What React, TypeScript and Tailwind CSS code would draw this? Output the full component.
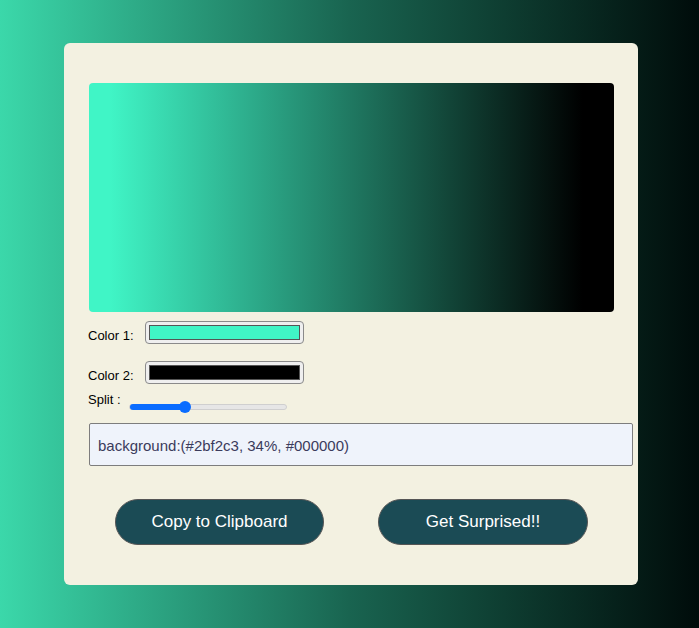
import { useState } from "react";

export default function App() {
    const [color1] = useState("#40f5c6");
    const [color2] = useState("#000000");
    const [split] = useState(34);

    return (
        <div
            className="w-full h-[628px] flex items-center justify-center bg-[linear-gradient(90deg,#3bd8aa_0%,#196450_50%,#000c0a_100%)]"
            style={{ fontFamily: '"Liberation Sans", Arial, sans-serif' }}
        >
            <div className="ml-[3px] w-[574px] h-[542px] bg-[#f3f1e1] rounded-[6px] pt-[40px] pb-[40px] pl-[25px] pr-[24px]">
                {/* Preview */}
                <div
                    className="h-[229px] rounded-[4px]"
                    style={{ background: `linear-gradient(90deg, ${color1} 4%, ${color2} 94%)` }}
                />

                {/* Color 1 */}
                <div className="mt-[9px] h-[23px] flex items-center -ml-[1px]">
                    <span className="w-[57px] text-[13px] leading-[15px] text-black mt-[5px]">Color 1:</span>
                    <div className="w-[159px] h-[23px] rounded-[4px] border border-[#8a8a8a] bg-[#efefef] p-[3px]">
                        <div className="w-full h-full border border-[#555] bg-[#40f5c6]" />
                    </div>
                </div>

                {/* Color 2 */}
                <div className="mt-[17px] h-[23px] flex items-center -ml-[1px]">
                    <span className="w-[57px] text-[13px] leading-[15px] text-black mt-[5px]">Color 2:</span>
                    <div className="w-[159px] h-[23px] rounded-[4px] border border-[#8a8a8a] bg-[#efefef] p-[3px]">
                        <div className="w-full h-full border border-[#555] bg-black" />
                    </div>
                </div>

                {/* Split */}
                <div className="mt-[8px] h-[18px] flex items-start -ml-[1px]">
                    <span className="w-[41px] text-[13px] leading-[15px] text-black">Split :</span>
                    <div className="relative mt-[12px] w-[158px] h-[6px] rounded-full bg-[#e6e6e6] border border-[#cfcfcf]">
                        <div className="absolute left-0 top-[-1px] h-[6px] w-[56px] rounded-full bg-[#0a6cff]" />
                        <div className="absolute left-[49px] top-[-4px] w-[12px] h-[12px] rounded-full bg-[#0a6cff]" />
                    </div>
                </div>

                {/* Output */}
                <div className="mt-[13px] w-[544px] h-[43px] flex items-center px-[8px] pt-[4px] bg-[#eff3fb] border border-[#7d7d7d] rounded-[2px]">
                    <span className="text-[15px] text-[#3b3b5c]">
                        background:(#2bf2c3, {split}%, #000000)
                    </span>
                </div>

                {/* Buttons */}
                <div className="mt-[33px] ml-[26px] flex gap-[54px]">
                    <button className="w-[209px] h-[46px] rounded-full bg-[#1b4b55] border border-[#555] text-white text-[17px]">
                        Copy to Clipboard
                    </button>
                    <button className="w-[210px] h-[46px] rounded-full bg-[#1b4b55] border border-[#555] text-white text-[17px]">
                        Get Surprised!!
                    </button>
                </div>
            </div>
        </div>
    );
}
